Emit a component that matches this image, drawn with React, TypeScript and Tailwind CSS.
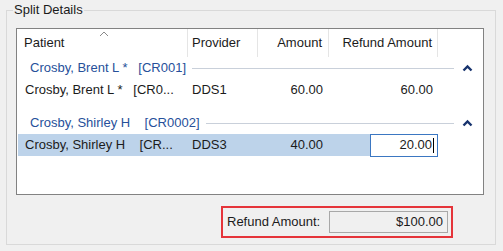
const font = { fontFamily: '"Liberation Sans", Arial, sans-serif' };

function Chevron() {
  return (
    <svg width="11" height="8" viewBox="0 0 11 8" className="block">
      <polyline points="1.5,6.5 5.5,2.5 9.5,6.5" fill="none" stroke="#17336e" strokeWidth="2.4" />
    </svg>
  );
}

function GroupHeader({ label }: { label: string }) {
  return (
    <div className="flex h-[22px] items-center">
      <span className="whitespace-pre pl-[13px] text-[#27509a]">{label}</span>
      <div className="ml-[6px] h-px flex-1 bg-[#c9d0da]" />
      <div className="flex w-[29px] justify-start pl-[8px]">
        <Chevron />
      </div>
    </div>
  );
}

export default function App() {
  return (
    <div className="h-[251px] w-[503px] bg-[#f0f0f0] pl-[6px] pt-[2px] text-[13px] text-[#1b1b1b]" style={font}>
      <fieldset className="h-[243px] w-[490px] border border-[#d9d9d9]">
        <legend className="ml-[6px] px-[1px] leading-[16px]">Split Details</legend>

        <div className="ml-[9px] mt-[10px] h-[167px] w-[468px] border border-[#828282] bg-white">
          {/* column header */}
          <div className="flex h-[28px] items-stretch">
            <div className="relative flex w-[171px] items-center border-r border-[#e5e5e5] pl-[7px]">
              Patient
              <svg width="10" height="6" viewBox="0 0 10 6" className="absolute left-[82px] top-[2px]">
                <polyline points="1,5 5,1 9,5" fill="none" stroke="#8a8a8a" strokeWidth="1" />
              </svg>
            </div>
            <div className="flex w-[70px] items-center border-r border-[#e5e5e5] pl-[4px]">Provider</div>
            <div className="flex w-[71px] items-center justify-end border-r border-[#e5e5e5] pr-[6px]">Amount</div>
            <div className="flex w-[109px] items-center justify-end border-r border-[#e5e5e5] pr-[5px]">Refund Amount</div>
          </div>

          <GroupHeader label="Crosby, Brent L *   [CR001]" />
          <div className="flex h-[22px] items-center">
            <div className="w-[171px] whitespace-pre pl-[8px]">Crosby, Brent L *   [CR0...</div>
            <div className="w-[70px] pl-[4px]">DDS1</div>
            <div className="w-[71px] pr-[6px] text-right">60.00</div>
            <div className="w-[109px] pr-[5px] text-right">60.00</div>
          </div>

          <div className="mt-[11px]">
            <GroupHeader label="Crosby, Shirley H    [CR0002]" />
          </div>
          <div className="flex h-[22px] items-stretch pl-[1px]">
            <div className="flex w-[170px] items-center whitespace-pre bg-[#bdd3ea] pl-[7px]">Crosby, Shirley H    [CR...</div>
            <div className="flex w-[70px] items-center bg-[#bdd3ea] pl-[4px]">DDS3</div>
            <div className="flex w-[71px] items-center justify-end bg-[#bdd3ea] pr-[6px]">40.00</div>
            <div className="flex w-[109px] items-center">
              <div className="h-full flex-1 bg-[#bdd3ea]" />
              <div className="flex h-[23px] w-[68px] items-center justify-end border border-[#3b77c2] bg-white pr-[3px]">
                20.00
                <span className="ml-[1px] h-[15px] w-px bg-black" />
              </div>
            </div>
          </div>
        </div>

        <div className="ml-[214px] mt-[11px] flex h-[32px] w-[232px] items-center border-2 border-[#e5343a]">
          <span className="flex-1 pl-[4px]">Refund Amount:</span>
          <div className="mr-[3px] flex h-[22px] w-[119px] items-center justify-end border border-[#a8a8a8] bg-[#f0f0f0] pr-[4px]">
            $100.00
          </div>
        </div>
      </fieldset>
    </div>
  );
}
